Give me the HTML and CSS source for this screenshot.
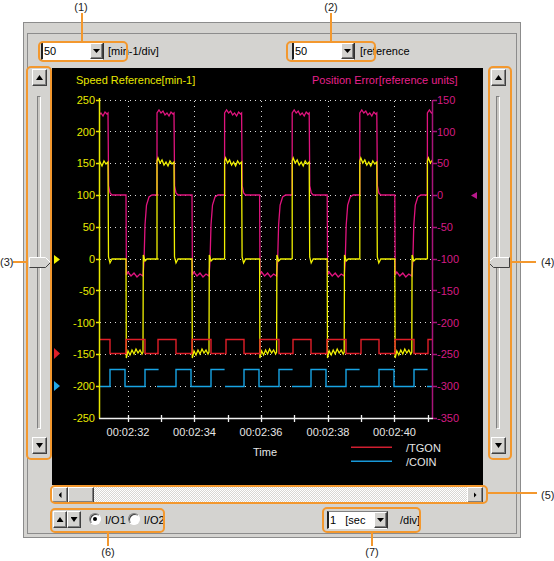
FILE: index.html
```html
<!DOCTYPE html>
<html>
<head>
<meta charset="utf-8">
<title>Trace</title>
<link rel="stylesheet" href="styles.css">
</head>
<body>
<div class="window">
  <div class="panel">
    <div class="toprow">
      <div class="group g1">
        <div class="combo"><span class="field">50</span><span class="raised ddbtn"><i class="tri-down"></i></span></div>
        <span class="unit">[min-1/div]</span>
      </div>
      <div class="group g2">
        <div class="combo"><span class="field">50</span><span class="raised ddbtn"><i class="tri-down"></i></span></div>
        <span class="unit u2">[reference</span>
      </div>
    </div>

    <div class="middle">
      <div class="vslider sl-left">
        <span class="raised sbtn"><i class="tri-up"></i></span>
        <div class="track">
          <div class="groove"></div>
          <svg class="thumb" width="22" height="11" viewBox="0 0 22 11">
            <polygon class="th-face" points="0.5,0.5 16.5,0.5 21.5,5.5 16.5,10.5 0.5,10.5"/>
            <polyline class="th-hi" points="0.5,10 0.5,0.5 16.5,0.5 21,5"/>
            <polyline class="th-lo" points="21.5,5.5 16.5,10.5 0.5,10.5"/>
          </svg>
        </div>
        <span class="raised sbtn"><i class="tri-down2"></i></span>
      </div>

      <div class="chart">
        <svg class="plot" width="431" height="417" viewBox="52 68 431 417">
          <defs>
            <clipPath id="plotclip"><rect x="100" y="88" width="333" height="332"/></clipPath>
            <path id="ycyc" d="M0,259 V161 L1,158 L3,163 L5,160 L7,165 L9,162 L11,166 L13,161 L15,164 L17,162 L17.5,257 L19,263 L21,259 H35 L35.3,358 L37,351 L39,355 L41,350 L43,354 L45,349 L47,353 L49,350 L51,354 L52,352 L52.3,255 L54,261 L56,259 H67.6"/>
            <path id="mcyc" d="M0,195 V113 L2,110 L4,113 L6,111 L8,115 L10,113 L12,116 L14,112 L16,114 L17,113 L17.6,186 L19,193 L21,195 H35 L35.4,275 L37,272 L40,276 L43,273 L46,277 L49,274 L52,276 L53,262 L54,225 L55.5,205 L58,197 L61,195 H67.6"/>
            <path id="rcyc" d="M0,353.5 H1 V339.5 H19 V353.5 H35 V339.5 H54 V353.5 H67.6"/>
            <path id="bcyc" d="M0,386.5 H0.5 V386.5 H19 V369.5 H34 V386.5 H54 V369.5 H67.6"/>
          </defs>

          <text class="t-yel" x="76" y="84">Speed Reference[min-1]</text>
          <text class="t-mag" x="312" y="84">Position Error[reference units]</text>

          <path class="grid" d="M100 100.5H432M100 131.5H432M100 163.5H432M100 195.5H432M100 227.5H432M100 259.5H432M100 290.5H432M100 322.5H432M100 354.5H432M100 386.5H432"/>
          <path class="grid" d="M128.5 101V418M194.5 101V418M261.5 101V418M328.5 101V418M394.5 101V418"/>

          <g clip-path="url(#plotclip)">
            <g class="tr-mag">
              <use href="#mcyc" x="91"/>
              <use href="#mcyc" x="157"/>
              <use href="#mcyc" x="224.6"/>
              <use href="#mcyc" x="292.2"/>
              <use href="#mcyc" x="359.8"/>
              <use href="#mcyc" x="427.4"/>
            </g>
            <g class="tr-yel">
              <use href="#ycyc" x="91"/>
              <use href="#ycyc" x="157"/>
              <use href="#ycyc" x="224.6"/>
              <use href="#ycyc" x="292.2"/>
              <use href="#ycyc" x="359.8"/>
              <use href="#ycyc" x="427.4"/>
            </g>
            <g class="tr-red">
              <use href="#rcyc" x="91"/>
              <use href="#rcyc" x="157"/>
              <use href="#rcyc" x="225"/>
              <use href="#rcyc" x="292"/>
              <use href="#rcyc" x="360"/>
              <use href="#rcyc" x="427"/>
            </g>
            <g class="tr-blu">
              <use href="#bcyc" x="91"/>
              <use href="#bcyc" x="157"/>
              <use href="#bcyc" x="225"/>
              <use href="#bcyc" x="292"/>
              <use href="#bcyc" x="360"/>
              <use href="#bcyc" x="427"/>
            </g>
          </g>

          <path class="ax-yel" d="M99.5 98V418.5M96 100.5H99M96 131.5H99M96 163.5H99M96 195.5H99M96 227.5H99M96 259.5H99M96 290.5H99M96 322.5H99M96 354.5H99M96 386.5H99"/>
          <path class="ax-mag" d="M432.5 100V418.5M433 100.5H437M433 131.5H437M433 163.5H437M433 195.5H437M433 227.5H437M433 259.5H437M433 290.5H437M433 322.5H437M433 354.5H437M433 386.5H437M433 418.5H437"/>
          <path class="ax-x" d="M99 418.5H433M128.5 415V422M161.5 415V422M194.5 415V422M228.5 415V422M261.5 415V422M294.5 415V422M328.5 415V422M361.5 415V422M394.5 415V422M428.5 415V422"/>

          <g class="t-yel" text-anchor="end">
            <text x="95" y="104">250</text>
            <text x="95" y="136">200</text>
            <text x="95" y="167">150</text>
            <text x="95" y="199">100</text>
            <text x="95" y="231">50</text>
            <text x="95" y="263">0</text>
            <text x="95" y="295">-50</text>
            <text x="95" y="327">-100</text>
            <text x="95" y="358">-150</text>
            <text x="95" y="390">-200</text>
            <text x="95" y="422">-250</text>
          </g>
          <g class="t-mag2">
            <text x="437" y="104">150</text>
            <text x="437" y="136">100</text>
            <text x="437" y="167">50</text>
            <text x="437" y="199">0</text>
            <text x="437" y="231">-50</text>
            <text x="437" y="263">-100</text>
            <text x="437" y="295">-150</text>
            <text x="437" y="327">-200</text>
            <text x="437" y="358">-250</text>
            <text x="437" y="390">-300</text>
            <text x="437" y="422">-350</text>
          </g>
          <g class="t-wht" text-anchor="middle">
            <text x="128" y="436">00:02:32</text>
            <text x="194.5" y="436">00:02:34</text>
            <text x="261" y="436">00:02:36</text>
            <text x="328" y="436">00:02:38</text>
            <text x="394.5" y="436">00:02:40</text>
          </g>
          <text class="t-wht" x="253" y="456">Time</text>
          <rect class="lg-red" x="351" y="446.5" width="41" height="1.5"/>
          <rect class="lg-blu" x="351" y="460.5" width="41" height="1.5"/>
          <text class="t-wht" x="406" y="452">/TGON</text>
          <text class="t-wht" x="406" y="466">/COIN</text>

          <polygon class="mk-yel" points="54,255 60,259.5 54,264"/>
          <polygon class="mk-red" points="54,348 60,353.5 54,359"/>
          <polygon class="mk-blu" points="54,381 60,386 54,391"/>
          <polygon class="mk-mag" points="477,192 471,195.5 477,199"/>
        </svg>
      </div>

      <div class="vslider sl-right">
        <span class="raised sbtn"><i class="tri-up"></i></span>
        <div class="track">
          <div class="groove"></div>
          <svg class="thumb" width="22" height="11" viewBox="0 0 22 11">
            <polygon class="th-face" points="21.5,0.5 5.5,0.5 0.5,5.5 5.5,10.5 21.5,10.5"/>
            <polyline class="th-hi" points="1,5 5.5,0.5 21.5,0.5"/>
            <polyline class="th-lo" points="21.5,0.5 21.5,10.5 5.5,10.5 0.5,5.5"/>
          </svg>
        </div>
        <span class="raised sbtn"><i class="tri-down2"></i></span>
      </div>
    </div>

    <div class="hscroll">
      <span class="raised hbtn"><i class="tri-left"></i></span>
      <span class="raised hthumb"></span>
      <span class="htrack"></span>
      <span class="raised hbtn"><i class="tri-right"></i></span>
    </div>

    <div class="bottomrow">
      <div class="leftctl">
        <span class="raised spin"><i class="tri-up"></i></span>
        <span class="raised spin"><i class="tri-down2"></i></span>
        <span class="radio-item first"><span class="radio on"></span><span class="rlabel">I/O1</span></span>
        <span class="radio-item second"><span class="radio"></span><span class="rlabel">I/O2</span></span>
      </div>
      <div class="combo c3"><span class="field">1   [sec</span><span class="raised ddbtn"><i class="tri-down"></i></span></div>
      <span class="unit u3">/div]</span>
    </div>
  </div>
</div>

<div class="callout b1"></div>
<div class="callout b2"></div>
<div class="callout b3"></div>
<div class="callout b4"></div>
<div class="callout b5"></div>
<div class="callout b6"></div>
<div class="callout b7"></div>

<div class="cline ln1"></div>
<div class="cline ln2"></div>
<div class="cline ln3"></div>
<div class="cline ln4"></div>
<div class="cline ln5"></div>
<div class="cline ln6"></div>
<div class="cline ln7"></div>

<span class="ctext tx1">(1)</span>
<span class="ctext tx2">(2)</span>
<span class="ctext tx3">(3)</span>
<span class="ctext tx4">(4)</span>
<span class="ctext tx5">(5)</span>
<span class="ctext tx6">(6)</span>
<span class="ctext tx7">(7)</span>
</body>
</html>
```

FILE: styles.css
```css
* { box-sizing: border-box; }
html, body { margin: 0; padding: 0; }
body {
  width: 554px;
  height: 561px;
  overflow: hidden;
  position: relative;
  background: #ffffff;
  font-family: "Liberation Sans", Arial, sans-serif;
  font-size: 11px;
  color: #000;
}

.window {
  margin: 22px 0 0 23px;
  width: 498px;
  height: 516px;
  border: 1px solid #8c8c8c;
  padding: 10px 3px 3px 3px;
  background: #d4d3d0;
}
.panel {
  width: 490px;
  height: 501px;
  border: 1px solid #8c8c8c;
  display: flex;
  flex-direction: column;
}

/* top row */
.toprow {
  height: 34px;
  flex: none;
  padding: 8px 0 0 13px;
  display: flex;
  align-items: flex-start;
}
.group { display: flex; align-items: center; }
.g1 { width: 251px; }

.combo {
  display: flex;
  width: 63px;
  height: 18px;
  border-style: solid;
  border-width: 1px 1px 1px 2px;
  border-color: #808080 #303030 #ffffff #202020;
  background: #fff;
}
.field {
  flex: 1;
  padding-left: 1px;
  line-height: 16px;
  white-space: pre;
  background: #fff;
}
.unit { margin-left: 4px; line-height: 18px; }
.u2 { margin-left: 5px; }

.raised {
  display: flex;
  align-items: center;
  justify-content: center;
  background: #d4d3d0;
  border: 1px solid;
  border-color: #ffffff #404040 #404040 #ffffff;
  box-shadow: inset -1px -1px 0 #808080;
  flex: none;
}
.ddbtn { width: 13px; height: 16px; }

.tri-down, .tri-down2, .tri-up, .tri-left, .tri-right {
  display: block;
  background: #000;
}
.tri-down { width: 7px; height: 4px; clip-path: polygon(0 0, 100% 0, 50% 100%); }
.tri-down2 { width: 7px; height: 5px; clip-path: polygon(0 0, 100% 0, 50% 100%); }
.tri-up { width: 7px; height: 5px; clip-path: polygon(50% 0, 100% 100%, 0 100%); }
.tri-left { width: 3px; height: 6px; clip-path: polygon(100% 0, 100% 100%, 0 50%); }
.tri-right { width: 3px; height: 6px; clip-path: polygon(0 0, 100% 50%, 0 100%); }

/* middle */
.middle {
  display: grid;
  grid-template-columns: 24px 431px 33px;
  height: 417px;
  flex: none;
}
.vslider {
  display: flex;
  flex-direction: column;
  align-items: flex-start;
  padding-top: 1px;
}
.sl-left { padding-left: 4px; }
.sl-right { padding-left: 8px; }
.sbtn { width: 15px; height: 17px; }
.track {
  position: relative;
  width: 15px;
  height: 351px;
}
.groove {
  width: 4px;
  height: 333px;
  margin: 10px 0 0 5px;
  border: 1px solid;
  border-color: #808080 #ffffff #ffffff #808080;
  background: #c8c6c2;
}
.thumb {
  position: absolute;
  left: -3px;
  top: 171px;
  display: block;
}
.th-face { fill: #d4d3d0; }
.th-hi { fill: none; stroke: #ffffff; stroke-width: 1; }
.th-lo { fill: none; stroke: #404040; stroke-width: 1; }

.chart {
  width: 431px;
  height: 417px;
  background: #000;
}
.plot { display: block; }
.plot text { font-family: "Liberation Sans", Arial, sans-serif; font-size: 11px; }
.t-yel { fill: #e8e800; }
.t-mag { fill: #e8208c; }
.t-mag2 { fill: #d41c84; }
.t-wht { fill: #e6e6e6; }
.grid { fill: none; stroke: #d8d8d8; stroke-width: 1; stroke-dasharray: 1 4; shape-rendering: crispEdges; }
.ax-yel { fill: none; stroke: #e8e800; stroke-width: 1.5; }
.ax-mag { fill: none; stroke: #a8147a; stroke-width: 1.5; }
.ax-x { fill: none; stroke: #f0f0f0; stroke-width: 1.3; }
.tr-yel { fill: none; stroke: #f0f000; stroke-width: 1.3; }
.tr-mag { fill: none; stroke: #e0147e; stroke-width: 1.3; }
.tr-red { fill: none; stroke: #e01e28; stroke-width: 1.4; }
.tr-blu { fill: none; stroke: #18a4e4; stroke-width: 1.4; }
.lg-red { fill: #d01e30; }
.lg-blu { fill: #1898d8; }
.mk-yel { fill: #f0f000; }
.mk-red { fill: #e01e28; }
.mk-blu { fill: #20a8e8; }
.mk-mag { fill: #b8188c; }

/* horizontal scrollbar */
.hscroll {
  display: flex;
  margin: 2px 0 0 24px;
  width: 431px;
  height: 16px;
  flex: none;
}
.hbtn { width: 16px; height: 16px; }
.hthumb { width: 26px; height: 16px; }
.htrack {
  flex: 1;
  height: 16px;
  background-color: #ecebe8;
  background-image: repeating-conic-gradient(#ffffff 0 25%, #d8d7d4 0 50%);
  background-size: 2px 2px;
}

/* bottom row */
.bottomrow {
  display: flex;
  align-items: flex-start;
  margin: 8px 0 0 25px;
  height: 18px;
  flex: none;
}
.leftctl {
  width: 274px;
  display: flex;
  align-items: flex-start;
}
.spin { width: 14px; height: 17px; }
.radio-item { display: flex; align-items: flex-start; }
.first { margin-left: 8px; }
.second { margin-left: 2px; }
.radio {
  width: 12px;
  height: 12px;
  margin-top: 2px;
  border-radius: 50%;
  background: #fff;
  border: 1px solid;
  border-color: #808080 #ffffff #ffffff #808080;
  box-shadow: inset 1px 1px 0 #404040;
  display: flex;
  align-items: center;
  justify-content: center;
}
.radio.on::after {
  content: "";
  width: 4px;
  height: 4px;
  border-radius: 50%;
  background: #000;
}
.rlabel { margin-left: 4px; line-height: 13px; padding-top: 3px; }
.c3 { width: 61px; }
.u3 { margin-left: 12px; }

/* callouts */
.callout {
  position: absolute;
  border: 2px solid #f3982e;
  border-radius: 5px;
}
.b1 { left: 38px; top: 41px; width: 90px; height: 21px; }
.b2 { left: 286px; top: 41px; width: 90px; height: 21px; }
.b3 { left: 26px; top: 66px; width: 26px; height: 394px; }
.b4 { left: 488px; top: 66px; width: 24px; height: 394px; }
.b5 { left: 50px; top: 485px; width: 438px; height: 19px; }
.b6 { left: 50px; top: 508px; width: 115px; height: 25px; }
.b7 { left: 322px; top: 507px; width: 99px; height: 26px; }

.cline { position: absolute; background: #f3982e; }
.ln1 { left: 81px; top: 13px; width: 2px; height: 28px; }
.ln2 { left: 330px; top: 13px; width: 2px; height: 28px; }
.ln3 { left: 13px; top: 261px; width: 13px; height: 2px; }
.ln4 { left: 512px; top: 261px; width: 24px; height: 2px; }
.ln5 { left: 488px; top: 492px; width: 49px; height: 2px; }
.ln6 { left: 107px; top: 533px; width: 2px; height: 13px; }
.ln7 { left: 371px; top: 533px; width: 2px; height: 13px; }

.ctext {
  position: absolute;
  font-size: 11px;
  line-height: 12px;
  color: #222;
}
.tx1 { left: 66px; top: 1px; width: 30px; text-align: center; }
.tx2 { left: 316px; top: 1px; width: 30px; text-align: center; }
.tx3 { left: 0; top: 256px; }
.tx4 { left: 541px; top: 256px; }
.tx5 { left: 541px; top: 489px; }
.tx6 { left: 93px; top: 546px; width: 30px; text-align: center; }
.tx7 { left: 357px; top: 546px; width: 30px; text-align: center; }
```
